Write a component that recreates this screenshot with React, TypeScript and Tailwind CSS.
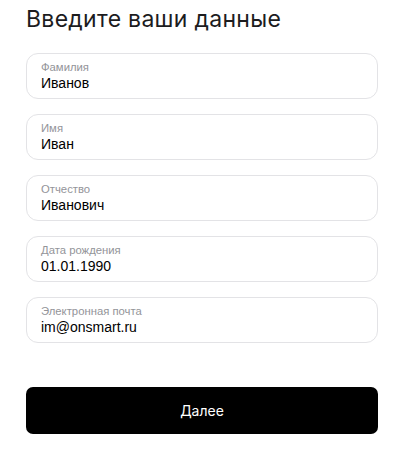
import React from "react";

const fields = [
  { label: "Фамилия", value: "Иванов" },
  { label: "Имя", value: "Иван" },
  { label: "Отчество", value: "Иванович" },
  { label: "Дата рождения", value: "01.01.1990" },
  { label: "Электронная почта", value: "im@onsmart.ru" },
];

export default function App() {
  return (
    <div className="w-[407px] h-[456px] bg-white pl-[26px] pt-[4px]" style={{ fontFamily: "'Liberation Sans', Arial, sans-serif" }}>
      <div className="w-[352px]">
        <h1 className="text-[23px] leading-[30px] text-[#1c1c1e] font-normal tracking-[0.3px]" style={{ fontFamily: "Inter, sans-serif" }}>
          Введите ваши данные
        </h1>
        <div className="mt-[19px] flex flex-col gap-[15px]">
          {fields.map((f) => (
            <div key={f.label} className="h-[46px] rounded-[12px] border border-[#e3e3e6] pl-[14px] pt-[7px]">
              <div className="text-[11.3px] leading-[13px] text-[#939499]">{f.label}</div>
              <div className="text-[14px] leading-[18px] text-black">{f.value}</div>
            </div>
          ))}
        </div>
        <button className="mt-[44px] w-full h-[47px] rounded-[7px] bg-black text-white text-[14px]" style={{ fontFamily: "Inter, sans-serif" }}>
          Далее
        </button>
      </div>
    </div>
  );
}
